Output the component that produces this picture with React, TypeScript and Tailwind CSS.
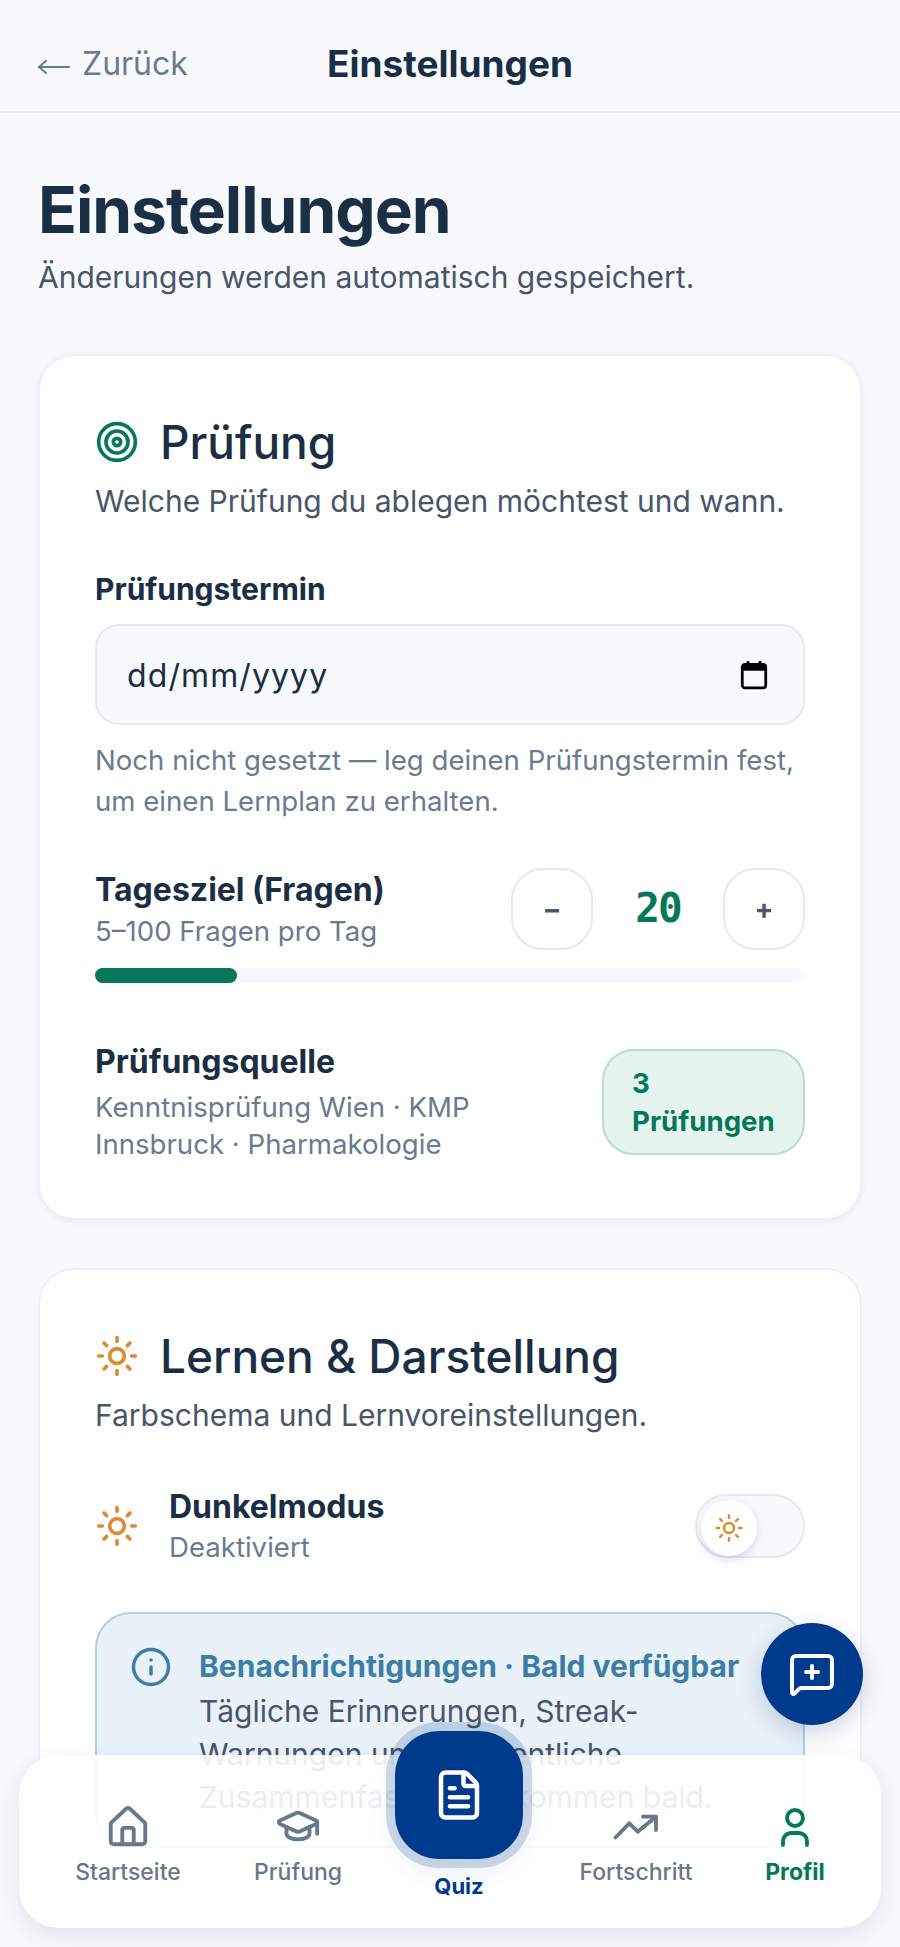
import React from "react";
import { Target, Sun, Info, MessageSquarePlus, GraduationCap, FileText } from "lucide-react";

function CalendarGlyph() {
  return (
    <svg width="30" height="32" viewBox="0 0 28 30" fill="none" className="text-black">
      <rect x="3" y="5" width="22" height="22" rx="2.5" stroke="currentColor" strokeWidth="2.6" />
      <rect x="3" y="5" width="22" height="6" fill="currentColor" />
      <rect x="7" y="2" width="2.6" height="5" fill="currentColor" />
      <rect x="18.4" y="2" width="2.6" height="5" fill="currentColor" />
    </svg>
  );
}

function BackArrow() {
  return (
    <svg width="32" height="20" viewBox="0 0 32 20" fill="none" stroke="currentColor" strokeWidth="2" strokeLinecap="round" strokeLinejoin="round" className="mt-[5px] shrink-0">
      <path d="M1 10h30" />
      <path d="M8 4 1 10l7 6" />
    </svg>
  );
}

function HomeIcon() {
  return (
    <svg width="46" height="46" viewBox="0 0 24 24" fill="none" stroke="currentColor" strokeWidth="2" strokeLinecap="round" strokeLinejoin="round">
      <path d="M3 10.5 11 3a1.5 1.5 0 0 1 2 0l8 7.5V20a1.5 1.5 0 0 1-1.5 1.5h-15A1.5 1.5 0 0 1 3 20Z" />
      <path d="M9 21.5V14a1 1 0 0 1 1-1h4a1 1 0 0 1 1 1v7.5" />
    </svg>
  );
}

function TrendIcon() {
  return (
    <svg width="46" height="46" viewBox="0 0 46 46" fill="none" stroke="currentColor" strokeWidth="3.8" strokeLinecap="round" strokeLinejoin="round">
      <path d="M2.5 34.5 16.3 20.3l8.4 8.4L43 13.7" />
      <path d="M30 13.7h13V27" />
    </svg>
  );
}

function ProfileIcon() {
  return (
    <svg width="46" height="46" viewBox="0 0 46 46" fill="none" stroke="currentColor" strokeWidth="3.8" strokeLinecap="round" strokeLinejoin="round">
      <circle cx="23" cy="15" r="8" />
      <path d="M11 42v-4a8 8 0 0 1 8-8h8a8 8 0 0 1 8 8v4" />
    </svg>
  );
}

function NavItem({ icon, label, active }: { icon: React.ReactNode; label: string; active?: boolean }) {
  return (
    <div className={`flex flex-col items-center gap-[9px] ${active ? "text-[#047857]" : "text-[#6b7689]"}`}>
      <div className="flex h-[46px] w-[46px] items-center justify-center">{icon}</div>
      <span className={`text-[23px] leading-[28px] ${active ? "font-bold" : "font-medium"}`}>{label}</span>
    </div>
  );
}

export default function App() {
  return (
    <div className="relative h-[1947px] w-[900px] overflow-hidden bg-[#f8f9fd] font-['Inter',sans-serif] text-[#1a2e44]">
      <header className="flex h-[113px] items-center justify-between border-b-2 border-[#eceef3] px-[38px] pt-[17px]">
        <div className="flex w-[149px] items-center gap-[12px] whitespace-nowrap text-[32px] text-[#6b7a90]">
          <BackArrow />
          <span>Zurück</span>
        </div>
        <div className="text-[37px] font-bold">Einstellungen</div>
        <div className="w-[149px]" />
      </header>

      <main className="px-[38px]">
        <h1 className="mt-[57px] text-[64px] font-bold leading-[80px] tracking-[-1px]">Einstellungen</h1>
        <p className="mt-[6px] text-[30px] leading-[42px] text-[#4a5568]">Änderungen werden automatisch gespeichert.</p>

        <section className="mt-[56px] h-[866px] rounded-[36px] border-2 border-[#eef0f5] bg-white px-[55px] pt-[56px] shadow-[0_2px_6px_rgba(20,40,80,0.06)]">
          <div className="flex items-center gap-[21px]">
            <Target size={44} strokeWidth={2} className="text-[#047857]" />
            <h2 className="text-[46px] font-medium leading-[60px]">Prüfung</h2>
          </div>
          <p className="mt-[8px] text-[30px] leading-[42px] text-[#4a5568]">Welche Prüfung du ablegen möchtest und wann.</p>

          <div className="mt-[47px] text-[30px] font-bold leading-[40px]">Prüfungstermin</div>
          <div className="mt-[15px] flex h-[101px] items-center justify-between rounded-[24px] border-2 border-[#e5e9f0] bg-[#f8f9fd] pl-[30px] pr-[34px]">
            <span className="pt-[3px] text-[32px] tracking-[1.1px]">dd/mm/yyyy</span>
            <CalendarGlyph />
          </div>
          <p className="mt-[15px] text-[27.6px] leading-[41px] text-[#6b7a90]">Noch nicht gesetzt — leg deinen Prüfungstermin fest, um einen Lernplan zu erhalten.</p>

          <div className="mt-[46px] flex items-center justify-between">
            <div>
              <div className="text-[32px] font-bold leading-[42px]">Tagesziel (Fragen)</div>
              <div className="mt-[1px] text-[27.6px] leading-[38px] text-[#6b7a90]">5–100 Fragen pro Tag</div>
            </div>
            <div className="flex items-center">
              <div className="flex h-[82px] w-[82px] items-center justify-center rounded-[32px] border-2 border-[#e5e9f0] text-[28px] font-bold text-[#4a5568]">−</div>
              <div className="w-[130px] text-center font-['DejaVu_Sans_Mono',monospace] text-[41px] font-bold tracking-[-2px] text-[#047857]">20</div>
              <div className="flex h-[82px] w-[82px] items-center justify-center rounded-[32px] border-2 border-[#e5e9f0] text-[28px] font-bold text-[#4a5568]">+</div>
            </div>
          </div>
          <div className="mt-[18px] h-[15px] rounded-full bg-[#f8f9fd]">
            <div className="h-full w-[20%] rounded-full bg-[#047857]" />
          </div>

          <div className="mt-[58px] flex items-center justify-between">
            <div className="w-[410px]">
              <div className="text-[32px] font-bold leading-[42px]">Prüfungsquelle</div>
              <div className="mt-[6px] text-[27.6px] leading-[37px] text-[#6b7a90]">Kenntnisprüfung Wien · KMP Innsbruck · Pharmakologie</div>
            </div>
            <div className="flex h-[106px] w-[203px] items-center rounded-[32px] border-2 border-[#b8ddd0] bg-[#e6f4ef] pl-[28px] text-[27.6px] font-bold leading-[38px] text-[#047857]">
              <span>3<br />Prüfungen</span>
            </div>
          </div>
        </section>

        <section className="mt-[48px] h-[640px] rounded-[36px] border-2 border-[#eef0f5] bg-white px-[55px] pt-[56px]">
          <div className="flex items-center gap-[21px]">
            <Sun size={44} strokeWidth={2} className="text-[#dd8a30]" />
            <h2 className="text-[46px] font-medium leading-[60px]">Lernen &amp; Darstellung</h2>
          </div>
          <p className="mt-[8px] text-[30px] leading-[42px] text-[#4a5568]">Farbschema und Lernvoreinstellungen.</p>

          <div className="mt-[50px] flex items-center justify-between">
            <div className="flex items-center gap-[30px]">
              <Sun size={44} strokeWidth={2} className="text-[#dd8a30]" />
              <div>
                <div className="text-[32px] font-bold leading-[42px]">Dunkelmodus</div>
                <div className="text-[27.6px] leading-[38px] text-[#6b7a90]">Deaktiviert</div>
              </div>
            </div>
            <div className="relative h-[64px] w-[110px] rounded-full border-2 border-[#e5e9f0] bg-[#f8f9fd]">
              <div className="absolute left-[4px] top-[4px] flex h-[56px] w-[56px] items-center justify-center rounded-full bg-white shadow-[0_4px_10px_rgba(20,40,80,0.15)]">
                <Sun size={30} strokeWidth={2} className="text-[#dd8a30]" />
              </div>
            </div>
          </div>

          <div className="mt-[46px] flex h-[236px] gap-[27px] rounded-[36px] border-2 border-[#b4cfe0] bg-[#e9f2f9] pl-[33px] pt-[30px]">
            <Info size={42} strokeWidth={2} className="mt-[2px] shrink-0 text-[#3d7ea6]" />
            <div>
              <div className="whitespace-nowrap text-[30px] font-bold leading-[44px] text-[#3d7ea6]">Benachrichtigungen · Bald verfügbar</div>
              <p className="mt-[2px] w-[530px] text-[30px] leading-[43px] text-[#4a5568]">Tägliche Erinnerungen, Streak-Warnungen und wöchentliche Zusammenfassungen kommen bald.</p>
            </div>
          </div>
        </section>
      </main>

      <button className="absolute left-[761px] top-[1623px] flex h-[102px] w-[102px] items-center justify-center rounded-full bg-[#003a8c] text-white shadow-[0_8px_24px_rgba(0,40,100,0.2)]">
        <MessageSquarePlus size={48} strokeWidth={2} />
      </button>

      <nav className="absolute left-[19px] top-[1755px] h-[173px] w-[862px] rounded-[40px] bg-white/90 shadow-[0_8px_24px_rgba(20,40,80,0.1)]">
        <div className="grid h-full grid-cols-[170px_170px_154px_198px_120px] pl-[24px] pt-[48px]">
          <NavItem icon={<HomeIcon />} label="Startseite" />
          <NavItem icon={<GraduationCap size={46} strokeWidth={2} className="shrink-0" />} label="Prüfung" />
          <div />
          <NavItem icon={<TrendIcon />} label="Fortschritt" />
          <NavItem icon={<ProfileIcon />} label="Profil" active />
        </div>
      </nav>

      <div className="absolute left-[395px] top-[1731px] flex w-[128px] flex-col items-center">
        <div className="flex h-[128px] w-[128px] items-center justify-center rounded-[44px] bg-[#003a8c] text-white shadow-[0_0_0_9px_rgba(0,58,140,0.18),0_14px_28px_rgba(0,58,140,0.08)]">
          <FileText size={54} strokeWidth={2} />
        </div>
        <span className="mt-[13px] text-[22px] font-bold leading-[28px] text-[#003a8c]">Quiz</span>
      </div>
    </div>
  );
}
